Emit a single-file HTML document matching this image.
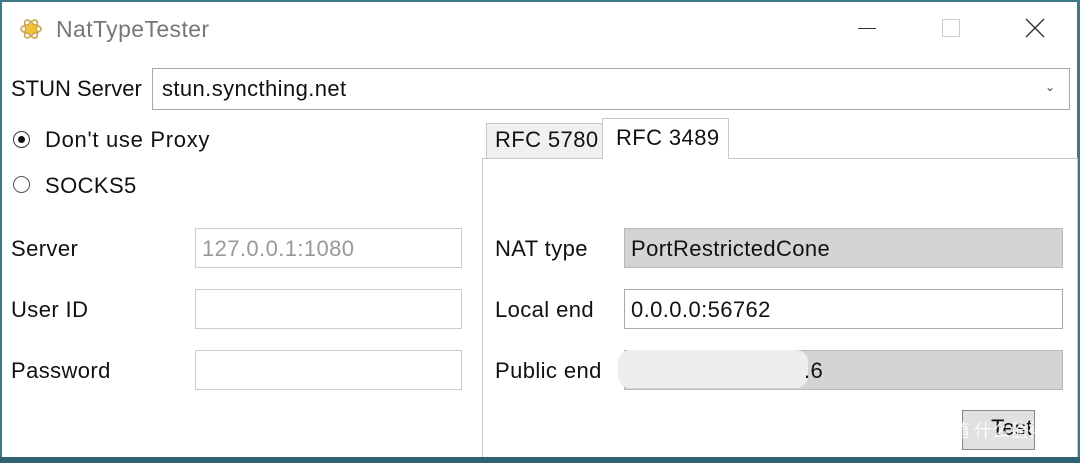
<!DOCTYPE html>
<html><head><style>
body{margin:0;width:1080px;height:463px;background:#fff;overflow:hidden;position:relative;font-family:"Liberation Sans",sans-serif;color:#111}
.a{position:absolute}
.t{font-size:22px;letter-spacing:0.4px;white-space:nowrap}
.box{position:absolute;border:1px solid #b4b4b4;background:#fff;box-sizing:border-box}
.gray{background:#d4d4d4;border-color:#b8b8b8}
</style></head><body>
<div class="a" style="left:0;top:0;width:2px;height:463px;background:#3c7a8a"></div>
<div class="a" style="right:0;top:0;width:3px;height:463px;background:#3c7a8a"></div>
<div class="a" style="left:0;top:0;width:1080px;height:2px;background:#3c7a8a"></div>
<svg class="a" style="left:19px;top:17px" width="24" height="24" viewBox="0 0 24 24"><g fill="none" stroke="#c9a24a" stroke-width="1.6"><ellipse cx="12" cy="12" rx="10" ry="4.5"/><ellipse cx="12" cy="12" rx="10" ry="4.5" transform="rotate(60 12 12)"/><ellipse cx="12" cy="12" rx="10" ry="4.5" transform="rotate(120 12 12)"/></g><circle cx="12" cy="12" r="5" fill="#f2c230"/></svg>
<div class="a t" style="left:56px;top:16px;color:#777;font-size:23px">NatTypeTester</div>
<div class="a" style="left:858px;top:28px;width:18px;height:1px;background:#333"></div>
<div class="a" style="left:942px;top:19px;width:16px;height:16px;border:1px solid #ccc"></div>
<svg class="a" style="left:1024px;top:17px" width="22" height="22"><path d="M2 2L20 20M20 2L2 20" stroke="#333" stroke-width="1.4"/></svg>
<div class="a t" style="left:11px;top:76px;letter-spacing:0">STUN Server</div>
<div class="box" style="left:152px;top:68px;width:918px;height:42px;border-color:#a8a8a8"></div>
<div class="a t" style="left:162px;top:76px">stun.syncthing.net</div>
<div class="a" style="left:1045px;top:80px;font-size:12px;color:#444">⌄</div>
<div class="a" style="left:13px;top:131px;width:17px;height:17px;border:1px solid #333;border-radius:50%;box-sizing:border-box"></div>
<div class="a" style="left:18px;top:136px;width:7px;height:7px;background:#111;border-radius:50%"></div>
<div class="a t" style="left:45px;top:127px;letter-spacing:0.7px">Don't use Proxy</div>
<div class="a" style="left:13px;top:176px;width:17px;height:17px;border:1px solid #555;border-radius:50%;box-sizing:border-box"></div>
<div class="a t" style="left:45px;top:173px">SOCKS5</div>
<div class="a t" style="left:11px;top:236px">Server</div>
<div class="a t" style="left:11px;top:297px">User ID</div>
<div class="a t" style="left:11px;top:358px">Password</div>
<div class="box" style="left:195px;top:228px;width:267px;height:40px;border-color:#ccc"></div>
<div class="a t" style="left:202px;top:236px;color:#999">127.0.0.1:1080</div>
<div class="box" style="left:195px;top:289px;width:267px;height:40px;border-color:#ccc"></div>
<div class="box" style="left:195px;top:350px;width:267px;height:40px;border-color:#ccc"></div>
<div class="box" style="left:486px;top:123px;width:117px;height:36px;background:#f0f0f0;border-color:#c8c8c8"></div>
<div class="a t" style="left:495px;top:127px">RFC 5780</div>
<div class="box" style="left:482px;top:158px;width:596px;height:300px;border-color:#c8c8c8"></div>
<div class="a" style="left:602px;top:118px;width:127px;height:41px;background:#fff;border:1px solid #c8c8c8;border-bottom:none;box-sizing:border-box"></div>
<div class="a t" style="left:616px;top:125px">RFC 3489</div>
<div class="a t" style="left:495px;top:236px">NAT type</div>
<div class="a t" style="left:495px;top:297px">Local end</div>
<div class="a t" style="left:495px;top:358px">Public end</div>
<div class="box gray" style="left:624px;top:228px;width:439px;height:40px"></div>
<div class="a t" style="left:631px;top:236px">PortRestrictedCone</div>
<div class="box" style="left:624px;top:289px;width:439px;height:40px;border-color:#aaa"></div>
<div class="a t" style="left:631px;top:297px">0.0.0.0:56762</div>
<div class="box gray" style="left:624px;top:350px;width:439px;height:40px"></div>
<div class="a" style="left:618px;top:350px;width:190px;height:38px;background:#eee;border-radius:12px"></div>
<div class="a t" style="left:804px;top:358px">.6</div>
<div class="box" style="left:962px;top:410px;width:73px;height:40px;background:#e1e1e1;border-color:#888"></div>
<div class="a t" style="left:991px;top:415px">Test</div>
<div class="a" style="left:952px;top:417px;font-size:18px;color:rgba(255,255,255,.85);font-family:'Noto Sans CJK SC',sans-serif;white-space:nowrap">值 什么值得买</div>
<div class="a" style="left:0;top:457px;width:1080px;height:6px;background:#2f6272"></div>
</body></html>
